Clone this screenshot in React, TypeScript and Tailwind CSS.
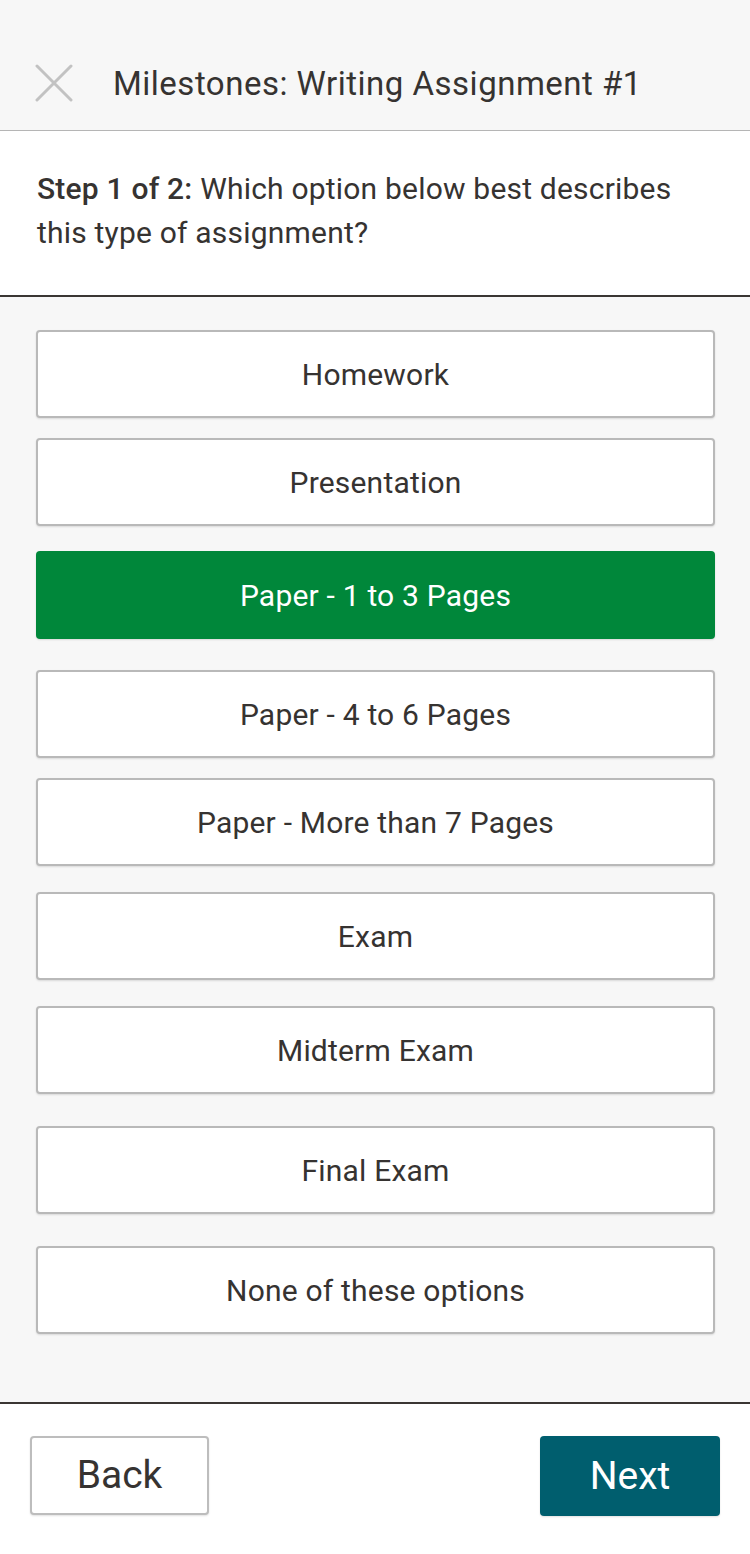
import React from 'react';

const options = [
  { label: 'Homework', mt: 'mt-[33px]' },
  { label: 'Presentation', mt: 'mt-[20px]' },
  { label: 'Paper - 1 to 3 Pages', mt: 'mt-[25px]', selected: true },
  { label: 'Paper - 4 to 6 Pages', mt: 'mt-[31px]' },
  { label: 'Paper - More than 7 Pages', mt: 'mt-[20px]' },
  { label: 'Exam', mt: 'mt-[26px]' },
  { label: 'Midterm Exam', mt: 'mt-[26px]' },
  { label: 'Final Exam', mt: 'mt-[32px]' },
  { label: 'None of these options', mt: 'mt-[32px]' },
];

const App: React.FC = () => {
  return (
    <div className="min-h-screen flex flex-col bg-white text-[#363331]" style={{ fontFamily: 'Roboto, "Noto Sans", sans-serif' }}>
      {/* Header */}
      <div className="h-[131px] bg-[#f7f7f7] border-b border-[#b5b5b5] flex items-center pt-[38px]">
        <svg className="ml-[35px] w-[38px] h-[38px] -mt-[2px]" viewBox="0 0 38 38">
          <path d="M2 2 L36 36 M36 2 L2 36" stroke="#c2c2c2" strokeWidth="3" strokeLinecap="round" />
        </svg>
        <h1 className="ml-[40px] text-[33px] tracking-[0.5px]">Milestones: Writing Assignment #1</h1>
      </div>

      {/* Question */}
      <div className="h-[166px] px-[37px] pt-[36px] border-b-2 border-[#3a3633]">
        <p className="text-[30px] leading-[44px] tracking-[0.2px]">
          <span className="font-medium">Step 1 of 2:</span> Which option below best describes this type of assignment?
        </p>
      </div>

      {/* Options */}
      <div className="h-[1107px] bg-[#f7f7f7] border-b-2 border-[#3a3633] px-[36px] flex flex-col">
        {options.map((o) => (
          <button
            key={o.label}
            className={`${o.mt} h-[88px] shrink-0 w-[679px] rounded-[4px] text-[30px] tracking-[0.2px] flex items-center justify-center shadow-[0_1px_2px_rgba(0,0,0,0.12)] ${
              o.selected ? 'bg-[#00873a] text-white' : 'bg-white border-2 border-[#b9b9b9]'
            }`}
          >
            {o.label}
          </button>
        ))}
      </div>

      {/* Footer */}
      <div className="flex justify-between items-start px-[30px] pt-[32px] h-[150px]">
        <button className="w-[179px] h-[79px] bg-white border-2 border-[#bdbdbd] rounded-[4px] text-[39px] shadow-[0_1px_2px_rgba(0,0,0,0.12)]">
          Back
        </button>
        <button className="w-[180px] h-[80px] bg-[#005e6e] text-white rounded-[4px] text-[39px] shadow-[0_1px_2px_rgba(0,0,0,0.12)]">
          Next
        </button>
      </div>
    </div>
  );
};

export default App;
